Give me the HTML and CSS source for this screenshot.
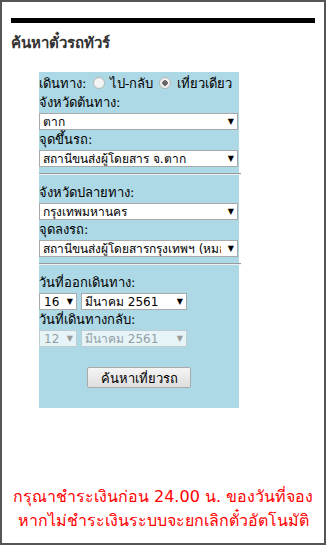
FILE: index.html
```html
<!DOCTYPE html>
<html>
<head>
    <meta charset="utf-8">
    <title>ค้นหาตั๋วรถทัวร์</title>
    <link rel="stylesheet" href="styles.css">
</head>
<body>

    <div class="page">
        <div class="topbar"></div>
        <h2 class="title">ค้นหาตั๋วรถทัวร์</h2>

        <form class="search">
            <div class="trip">
                เดินทาง:
                <label><input type="radio" name="trip"> ไป-กลับ</label>
                <label><input type="radio" name="trip" checked> เที่ยวเดียว</label>
            </div>

            <label class="lbl">จังหวัดต้นทาง:</label>
            <div class="sel full"><select><option>ตาก</option></select></div>
            <label class="lbl">จุดขึ้นรถ:</label>
            <div class="sel full"><select><option>สถานีขนส่งผู้โดยสาร จ.ตาก</option></select></div>

            <hr>

            <label class="lbl">จังหวัดปลายทาง:</label>
            <div class="sel full"><select><option>กรุงเทพมหานคร</option></select></div>
            <label class="lbl">จุดลงรถ:</label>
            <div class="sel full"><select><option>สถานีขนส่งผู้โดยสารกรุงเทพฯ (หมอชิต 2)</option></select></div>

            <hr>

            <label class="lbl">วันที่ออกเดินทาง:</label>
            <div class="dates">
                <div class="sel day"><select><option>16</option></select></div>
                <div class="sel month"><select><option>มีนาคม 2561</option></select></div>
            </div>
            <label class="lbl">วันที่เดินทางกลับ:</label>
            <div class="dates">
                <div class="sel day off"><select disabled><option>12</option></select></div>
                <div class="sel month off"><select disabled><option>มีนาคม 2561</option></select></div>
            </div>

            <div class="actions">
                <button type="button">ค้นหาเที่ยวรถ</button>
            </div>
        </form>

        <p class="notice">
            กรุณาชำระเงินก่อน 24.00 น. ของวันที่จอง<br>
            หากไม่ชำระเงินระบบจะยกเลิกตั๋วอัตโนมัติ
        </p>
    </div>

</body>
</html>
```

FILE: styles.css
```css
html, body {
    height: 100%;
}

body {
    margin: 0;
    box-sizing: border-box;
    border: 2px solid #555;
    background: #fff;
    font-family: Tahoma, "DejaVu Sans", "Noto Sans", sans-serif;
    color: #000;
}

.page {
    padding: 16px 9px 0;
}

.topbar {
    height: 5px;
    background: #000;
}

.title {
    margin: 9px 0 0;
    font-size: 15px;
    line-height: 22px;
    color: #333;
}

.search {
    width: 200px;
    margin: 18px 0 0 28px;
    padding: 2px 0 20px;
    background: lightblue;
    font-size: 13px;
}

.trip {
    line-height: 19px;
}

.trip label {
    margin-left: 2px;
}

.trip input {
    appearance: none;
    width: 12px;
    height: 12px;
    margin: 0 1px 0 0;
    vertical-align: -1px;
    border: 1px solid #b5b5b5;
    border-radius: 50%;
    background: #f4f4f4;
}

.trip input:checked {
    background: radial-gradient(circle, #666 0 2.5px, #f0f0f0 3px);
}

.lbl {
    display: block;
    line-height: 20px;
}

.sel {
    position: relative;
    height: 17px;
}

.sel::after {
    content: "▼";
    position: absolute;
    right: 4px;
    top: 2px;
    font-size: 8px;
    line-height: 13px;
    pointer-events: none;
}

.sel select {
    appearance: none;
    width: 100%;
    height: 17px;
    margin: 0;
    padding: 0 16px 0 3px;
    box-sizing: border-box;
    border: 1px solid #a9a9a9;
    border-radius: 0;
    background: #fff;
    font-family: inherit;
    font-size: 12px;
    color: #000;
}

.full {
    width: 199px;
}

.dates {
    display: flex;
    gap: 4px;
}

.day {
    width: 38px;
}

.sel.day select {
    padding: 0 12px 0 4px;
}

.month {
    width: 106px;
}

.sel.off::after {
    color: #999;
}

.sel.off select {
    color: #888;
    background: #fff;
    border-color: #c6c6c6;
}

hr {
    width: 202px;
    margin: 6px 0 8px;
    border: 0;
    border-top: 1px solid #999;
    border-bottom: 1px solid #eee;
}

.actions {
    margin-top: 20px;
    padding-left: 48px;
}

button {
    width: 104px;
    height: 21px;
    padding: 0;
    border: 1px solid #aaa;
    border-radius: 2px;
    background: linear-gradient(#f5f5f5, #dedede);
    font-family: inherit;
    font-size: 13px;
    color: #000;
}

.notice {
    margin: 77px 0 0;
    text-align: center;
    font-size: 16px;
    line-height: 24px;
    color: #f00;
}
```
